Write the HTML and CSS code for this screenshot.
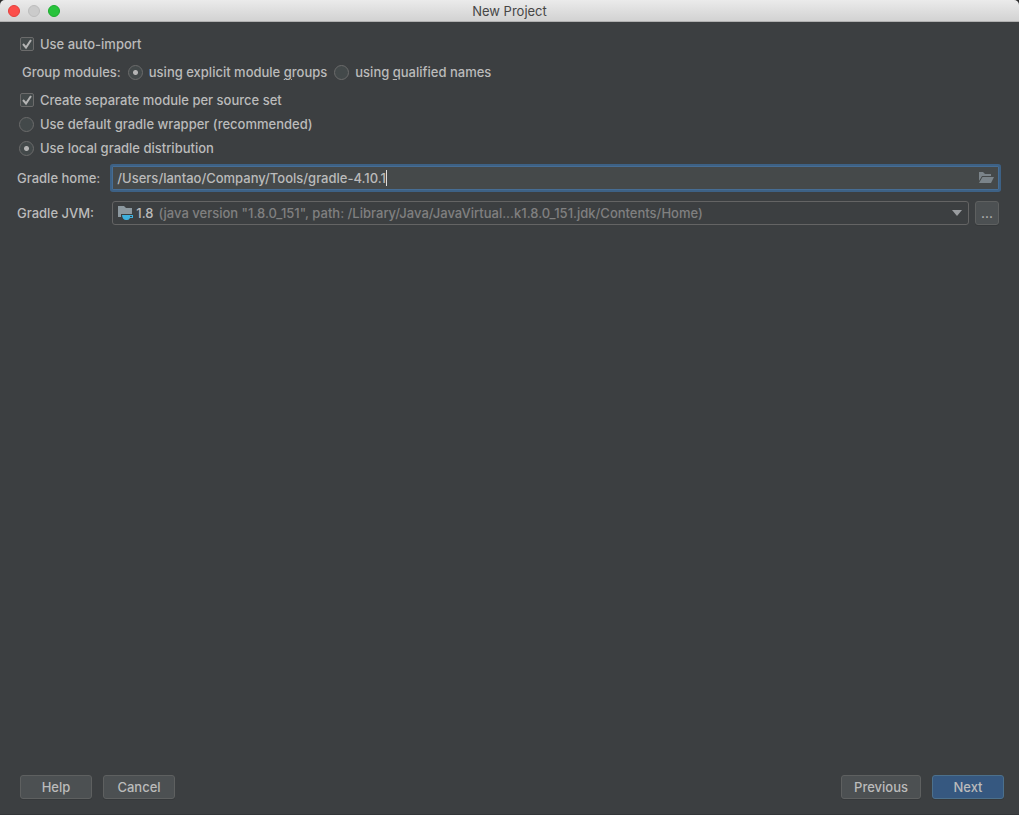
FILE: index.html
```
<!DOCTYPE html>
<html lang="en">

<head>
    <meta charset="UTF-8">
    <title>New Project</title>
    <link rel="stylesheet" href="styles.css">
</head>

<body>
    <header class="titlebar">
        <div class="window-buttons">
            <button type="button" class="dot close" aria-label="Close"></button>
            <button type="button" class="dot minimize" aria-label="Minimize" disabled></button>
            <button type="button" class="dot maximize" aria-label="Zoom"></button>
        </div>
        <h1>New Project</h1>
    </header>

    <form class="dialog">
        <main class="settings">
            <div class="row">
                <label><input type="checkbox" checked>Use auto-import</label>
            </div>
            <div class="row group-modules">
                <span>Group modules:</span>
                <label><input type="radio" name="group" checked><span>using explicit module <u>g</u>roups</span></label>
                <label><input type="radio" name="group"><span>using <u>q</u>ualified names</span></label>
            </div>
            <div class="row">
                <label><input type="checkbox" checked>Create separate module per source set</label>
            </div>
            <div class="row">
                <label><input type="radio" name="distribution">Use default gradle wrapper (recommended)</label>
            </div>
            <div class="row">
                <label><input type="radio" name="distribution" checked>Use local gradle distribution</label>
            </div>

            <div class="fields">
                <label for="gradle-home">Gradle home:</label>
                <div class="text-field">
                    <input type="text" id="gradle-home" value="/Users/lantao/Company/Tools/gradle-4.10.1" spellcheck="false">
                    <span class="caret"></span>
                    <button type="button" class="browse" aria-label="Browse">
                        <svg width="16" height="12" viewBox="0 0 16 12">
                            <path d="M1 0h4l2 2h6v2H4L1 9z" fill="#7b848a" />
                            <path d="M4.500 5H16l-3 6H1z" fill="#7b848a" />
                        </svg>
                    </button>
                </div>

                <label for="gradle-jvm">Gradle JVM:</label>
                <div class="jvm">
                    <div class="combo">
                        <svg width="16" height="14" viewBox="0 0 16 14">
                            <path d="M0 0h6l2 2h6v6H3v3H0z" fill="#8c989f" />
                            <path d="M4 9h11v3h-3c-1 1-1 2-3 2H8c-2 0-4-2-4-5z" fill="#3fb1de" />
                            <path d="M12 10h2v1h-2z" fill="#3c3f41" />
                        </svg>
                        <span class="sdk">1.8</span>
                        <select id="gradle-jvm">
                            <option>(java version "1.8.0_151", path: /Library/Java/JavaVirtual...k1.8.0_151.jdk/Contents/Home)</option>
                        </select>
                        <svg class="arrow" width="10" height="6" viewBox="0 0 10 6">
                            <path d="M0 0h10L5 6z" fill="#9a9da0" />
                        </svg>
                    </div>
                    <button type="button" class="btn more">...</button>
                </div>
            </div>
        </main>

        <footer class="actions">
            <button type="button" class="btn">Help</button>
            <button type="button" class="btn">Cancel</button>
            <button type="button" class="btn previous">Previous</button>
            <button type="submit" class="btn primary">Next</button>
        </footer>
    </form>
</body>

</html>
```
FILE: styles.css
```
* {
    margin: 0;
    padding: 0;
    box-sizing: border-box;
}

html {
    background-color: #2b2b2b;
}

body {
    display: flex;
    flex-direction: column;
    min-height: 100vh;
    font-family: Inter, "Liberation Sans", sans-serif;
    font-size: 13px;
    font-weight: 500;
    line-height: 16px;
    color: #bbbbbb;
    background-color: #3c3f41;
    border-bottom: 1px solid #333638;
    border-radius: 5px 5px 0 0;
    overflow: hidden;
}

button,
input,
select {
    font: inherit;
    color: inherit;
}

/* Title bar */
.titlebar {
    display: grid;
    grid-template-columns: 1fr auto 1fr;
    align-items: center;
    height: 22px;
    padding: 0 8px;
    background: linear-gradient(#ebebeb, #d2d2d2);
    border-bottom: 1px solid #b0b0b0;
}

.titlebar h1 {
    font-size: 13px;
    font-weight: 400;
    color: #464646;
}

.window-buttons {
    display: flex;
    gap: 8px;
}

.dot {
    width: 12px;
    height: 12px;
    border: 1px solid #bcbcbc;
    border-radius: 50%;
    background-color: #cbcbcb;
}

.dot.close {
    background-color: #fc4f4b;
    border-color: #e2403d;
}

.dot.maximize {
    background-color: #28c33c;
    border-color: #1cab2e;
}

/* Settings */
.dialog {
    flex: 1;
    display: flex;
    flex-direction: column;
}

.settings {
    flex: 1;
    padding: 10px 20px;
}

.row {
    display: flex;
    align-items: center;
    min-height: 24px;
}

.row label {
    display: flex;
    align-items: center;
    gap: 6px;
}

.group-modules {
    gap: 8px;
    margin: 4px 0;
    padding-left: 2px;
}

u {
    text-underline-offset: 2px;
}

input[type="checkbox"],
input[type="radio"] {
    appearance: none;
    width: 14px;
    height: 14px;
    border: 1px solid #6b6b6b;
    background: #43494a center no-repeat;
}

input[type="checkbox"] {
    border-radius: 2px;
}

input[type="checkbox"]:checked {
    background-image: url("data:image/svg+xml,%3Csvg xmlns='http://www.w3.org/2000/svg' width='12' height='12'%3E%3Cpath d='M2 6l3 3.500L10 2' fill='none' stroke='%23b4b4b4' stroke-width='2'/%3E%3C/svg%3E");
}

input[type="radio"] {
    width: 15px;
    height: 15px;
    margin-left: -1px;
    border-radius: 50%;
}

input[type="radio"]:checked {
    background-image: radial-gradient(circle, #b4b4b4 2px, transparent 3px);
}

.fields {
    display: grid;
    grid-template-columns: auto 1fr;
    align-items: center;
    gap: 11px 12px;
    margin: 6px 0 0 -3px;
}

.text-field {
    display: flex;
    align-items: center;
    height: 24px;
    padding: 0 4px;
    background-color: #45494a;
    border: 1px solid #466d94;
    box-shadow: 0 0 0 2px #3d6185;
    border-radius: 1px;
}

.text-field input {
    field-sizing: content;
    min-width: 0;
    background: none;
    border: none;
    outline: none;
}

.caret {
    width: 1px;
    height: 16px;
    background-color: #dddddd;
}

.browse {
    display: flex;
    margin-left: auto;
    background: none;
    border: none;
}

.jvm {
    display: flex;
    gap: 6px;
    min-width: 0;
}

.combo {
    flex: 1;
    display: flex;
    align-items: center;
    min-width: 0;
    height: 24px;
    padding: 0 6px 0 5px;
    border: 1px solid #646464;
    border-radius: 3px;
}

.combo svg {
    flex: none;
}

.sdk {
    margin: 0 5px 0 2px;
}

.combo select {
    flex: 1;
    min-width: 0;
    appearance: none;
    background: none;
    border: none;
    outline: none;
    color: #808080;
}

/* Buttons */
.btn {
    min-width: 72px;
    height: 24px;
    padding: 0 12px;
    background-color: #4c5052;
    border: 1px solid #5e6060;
    border-radius: 3px;
    box-shadow: 0 1px 0 #36393b;
}

.btn.more {
    min-width: 24px;
    padding: 0;
}

.btn.primary {
    background-color: #365880;
    border-color: #4c708c;
}

.actions {
    display: flex;
    gap: 11px;
    padding: 0 15px 15px 20px;
}

.actions .previous {
    margin-left: auto;
}
```
